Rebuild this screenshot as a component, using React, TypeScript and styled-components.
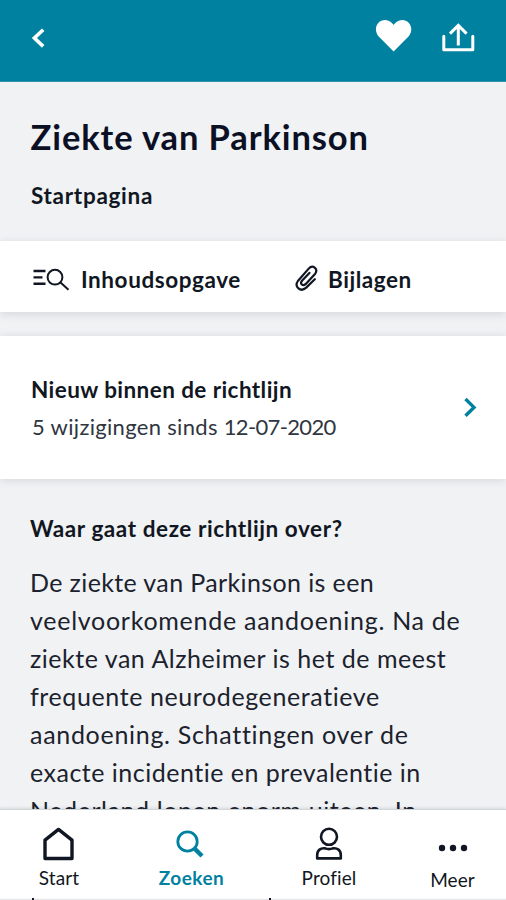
import React from 'react';
import styled, { createGlobalStyle } from 'styled-components';

const ink = '#111722';
const teal = '#00819f';

const GlobalStyle = createGlobalStyle`
  *, *::before, *::after { box-sizing: border-box; }
  body { margin: 0; background: #f0f2f4; }
  h1, h2, p { margin: 0; }
  button { border: 0; padding: 0; background: none; color: inherit; font: inherit; letter-spacing: inherit; }
`;

const Screen = styled.div`
  display: flex;
  flex-direction: column;
  height: 900px;
  overflow: hidden;
  background: #f0f2f4;
  color: ${ink};
  font-family: Lato, 'Liberation Sans', sans-serif;
  font-variant-ligatures: none;
  white-space: nowrap;
  svg { display: block; flex: none; }
`;

const TopBar = styled.header`
  display: flex;
  align-items: flex-start;
  flex: none;
  height: 82px;
  padding: 18px 30px 0 30px;
  background: ${teal};
  border-bottom: 1px solid #3594ad;
  color: #fff;
`;

const BackButton = styled.button`
  margin: 9px auto 0 0;
`;

const HeartButton = styled.button`
  margin-right: 29px;
`;

const ShareButton = styled.button`
  margin-top: 4px;
`;

const Content = styled.main`
  flex: 1;
  min-height: 0;
  overflow: hidden;
`;

const Hero = styled.section`
  height: 159px;
  padding: 33px 30px 0;
`;

const Title = styled.h1`
  font-size: 34.5px;
  font-weight: 700;
  line-height: 44px;
  letter-spacing: 0.89px;
  margin-left: 0.5px;
  color: #0b1024;
`;

const Strong = styled.h2<{ $spacing: number }>`
  font-size: 22.5px;
  font-weight: 700;
  line-height: 30px;
  letter-spacing: ${(p) => p.$spacing}px;
`;

const Subtitle = styled(Strong)`
  margin: 22px 0 0 1px;
`;

const Tabs = styled.nav`
  display: flex;
  align-items: flex-start;
  height: 71px;
  padding: 24px 0 0 33px;
  background: #fff;
  box-shadow: 0 2px 9px rgba(30, 40, 50, 0.13);
`;

const Tab = styled.div<{ $width: number; $gap: number }>`
  display: flex;
  gap: ${(p) => p.$gap}px;
  width: ${(p) => p.$width}px;
`;

const TabLabel = styled(Strong)``;

const NewsCard = styled.section`
  display: flex;
  align-items: flex-start;
  justify-content: space-between;
  height: 143px;
  margin-top: 24px;
  padding: 39px 29px 0 31px;
  background: #fff;
  box-shadow: 0 1px 9px rgba(30, 40, 50, 0.13);
  & > svg { margin-top: 22px; }
`;

const Changes = styled.p`
  margin: 7px 0 0 1px;
  font-size: 22px;
  line-height: 30px;
  letter-spacing: 0.32px;
  color: #303640;
`;

const ChangeDate = styled.span`
  letter-spacing: -0.66px;
`;

const Article = styled.article`
  padding: 35px 30px 0;
`;

const Paragraph = styled.p`
  margin-top: 19px;
  color: #1c222d;
`;

const Line = styled.span<{ $spacing: number }>`
  display: block;
  font-size: 25px;
  line-height: 38px;
  letter-spacing: ${(p) => p.$spacing}px;
`;

const BottomNav = styled.nav`
  display: flex;
  flex: none;
  height: 89px;
  border-top: 1px solid #d3d6d8;
  background: #fff;
  box-shadow: 0 -1px 3px rgba(30, 40, 50, 0.12);
  z-index: 1;
`;

const NavItem = styled.div<{ $width: number; $active?: boolean; $drop?: number }>`
  display: flex;
  flex: none;
  flex-direction: column;
  align-items: center;
  justify-content: space-between;
  width: ${(p) => p.$width}px;
  height: ${(p) => 81 + (p.$drop ?? 0)}px;
  padding-top: ${(p) => 17 + (p.$drop ?? 0)}px;
  color: ${(p) => (p.$active ? teal : ink)};
  font-size: 19px;
  font-weight: ${(p) => (p.$active ? 700 : 400)};
  line-height: 26px;
  letter-spacing: ${(p) => (p.$active ? 0.5 : 0.1)}px;
`;

const Underlay = styled.div`
  display: flex;
  flex: none;
  gap: 235px;
  height: 2px;
  padding-left: 32px;
  border-bottom: 1px solid #e6e8ea;
  background: #fff;
`;

const Tip = styled.i`
  width: 2px;
  height: 2px;
  background: ${ink};
`;

const lines: [string, number][] = [
  ['De ziekte van Parkinson is een', 0.38],
  ['veelvoorkomende aandoening. Na de', 0.73],
  ['ziekte van Alzheimer is het de meest', 0.52],
  ['frequente neurodegeneratieve', 0.6],
  ['aandoening. Schattingen over de', 0.7],
  ['exacte incidentie en prevalentie in', 0.5],
  ['Nederland lopen enorm uiteen. In', 0.58],
];

export default function App() {
  return (
    <>
      <GlobalStyle />
      <Screen>
        <TopBar>
          <BackButton aria-label="Terug">
            <svg width="16" height="22" viewBox="0 0 16 22" fill="none" stroke="currentColor" strokeWidth="3.6">
              <path d="M13.2 2.8 4.4 11l8.8 8.4" />
            </svg>
          </BackButton>
          <HeartButton aria-label="Favoriet">
            <svg width="37" height="35" viewBox="0 0 37 35" fill="currentColor">
              <path d="M18.6 33.5 3.2 18C-3.4 8.8 5.5-1.2 14 3.1c2 .9 3.5 2.2 4.6 3.9 1.1-1.7 2.6-3 4.6-3.9C31.7-1.2 40.6 8.8 34 18Z" />
            </svg>
          </HeartButton>
          <ShareButton aria-label="Delen">
            <svg width="35" height="31" viewBox="0 0 35 31" fill="none" stroke="currentColor" strokeWidth="3">
              <path d="M2.8 14.2v13.5h29V14.2" strokeLinejoin="round" strokeLinecap="round" />
              <path d="M17.3 23.5V3.5M9 11.6l8.3-8.2 8.3 8.2" />
            </svg>
          </ShareButton>
        </TopBar>
        <Content>
          <Hero>
            <Title>Ziekte van Parkinson</Title>
            <Subtitle $spacing={0.7}>Startpagina</Subtitle>
          </Hero>
          <Tabs>
            <Tab $width={261} $gap={11}>
              <svg width="37" height="26" viewBox="0 0 37 26" fill="none" stroke={ink} strokeWidth="2">
                <path d="M.5 6h12M.5 12.4h9M.5 18.8h12" strokeWidth="2.4" />
                <circle cx="22" cy="12.2" r="7.4" />
                <path d="m27.5 17.5 8 7.2" />
              </svg>
              <TabLabel as="span" $spacing={0.58}>Inhoudsopgave</TabLabel>
            </Tab>
            <Tab $width={130} $gap={10}>
              <svg width="24" height="27" viewBox="0 0 24 27" fill="none" stroke={ink} strokeWidth="2.2" strokeLinecap="round">
                <path d="m20.8 14.2-8.6 8.4c-5.7 5.2-12.2-.9-8.3-6.6L14.7 3.6c4-4.5 9.8.3 6.5 5.1l-9.4 10.2c-3 2.8-6.2-.2-3.8-3.2l7.4-7.8" />
              </svg>
              <TabLabel as="span" $spacing={0.55}>Bijlagen</TabLabel>
            </Tab>
          </Tabs>
          <NewsCard>
            <div>
              <Strong $spacing={0.42}>Nieuw binnen de richtlijn</Strong>
              <Changes>5 wijzigingen sinds <ChangeDate>12-07-2020</ChangeDate></Changes>
            </div>
            <svg width="13" height="21" viewBox="0 0 13 21" fill="none" stroke={teal} strokeWidth="3.4">
              <path d="m1.5 2 8.5 8.4-8.5 8.4" />
            </svg>
          </NewsCard>
          <Article>
            <Strong $spacing={0.58}>Waar gaat deze richtlijn over?</Strong>
            <Paragraph>
              {lines.map(([text, spacing]) => (
                <Line key={text} $spacing={spacing}>{text}</Line>
              ))}
            </Paragraph>
          </Article>
        </Content>
        <BottomNav>
          <NavItem $width={118}>
            <svg width="32" height="34" viewBox="0 0 32 34" fill="none" stroke="currentColor" strokeWidth="3.4" strokeLinejoin="round">
              <path d="M2 13.2 15.5 2.4 29 13.2v18.3H2Z" />
            </svg>
            Start
          </NavItem>
          <NavItem $width={147} $active>
            <svg width="31" height="34" viewBox="0 0 31 34" fill="none" stroke="currentColor">
              <circle cx="11.5" cy="14.5" r="9.7" strokeWidth="2.8" />
              <path d="m19 22 7 7" strokeWidth="4.4" />
            </svg>
            Zoeken
          </NavItem>
          <NavItem $width={128}>
            <svg width="28" height="34" viewBox="0 0 28 34" fill="none" stroke="currentColor" strokeWidth="2.6" strokeLinejoin="round">
              <circle cx="14" cy="9.8" r="8" />
              <path d="M2.2 31.4V28c0-5 3.5-7.2 8-6.6 2.6 1 5 1 7.6 0 4.5-.6 8 1.6 8 6.6v3.4Z" />
            </svg>
            Profiel
          </NavItem>
          <NavItem $width={119} $drop={2}>
            <svg width="30" height="34" viewBox="0 0 30 34" fill="currentColor">
              <circle cx="4" cy="19" r="3.2" />
              <circle cx="15" cy="19" r="3.2" />
              <circle cx="26" cy="19" r="3.2" />
            </svg>
            Meer
          </NavItem>
        </BottomNav>
        <Underlay>
          <Tip />
          <Tip />
        </Underlay>
      </Screen>
    </>
  );
}
